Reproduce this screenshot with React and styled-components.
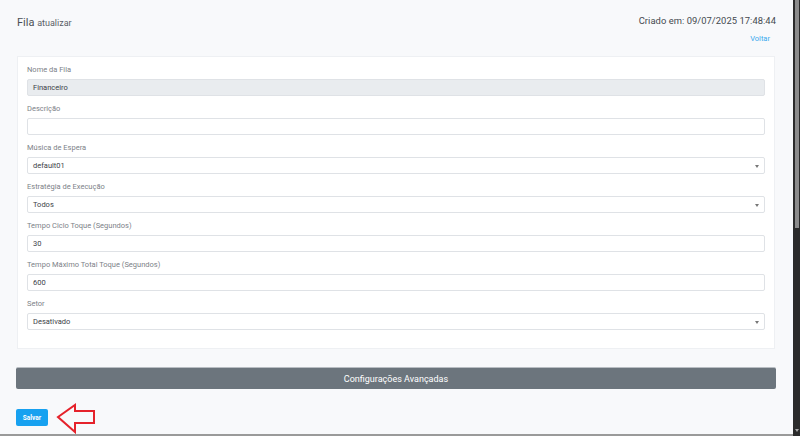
import React from "react";
import styled, { createGlobalStyle } from "styled-components";

const Global = createGlobalStyle`
  html, body { margin: 0; padding: 0; }
  body {
    background: #f8f9fb;
    font-family: Roboto, "Liberation Sans", Arial, sans-serif;
    overflow: hidden;
  }
`;

const Page = styled.div`
  display: flex;
  width: 800px;
  height: 436px;
  overflow: hidden;
`;

const Main = styled.main`
  flex: 1;
  display: flex;
  flex-direction: column;
  padding: 0 17px 0 16px;
  border-bottom: 2px solid #9a9a9a;
  box-sizing: border-box;
  height: 436px;
  overflow: hidden;

  & > * {
    flex-shrink: 0;
  }
`;

const Header = styled.header`
  display: flex;
  justify-content: space-between;
  align-items: flex-start;
  padding: 14px 0 0 1px;
  height: 56px;
  box-sizing: border-box;
`;

const Title = styled.h1`
  margin: 2px 0 0;
  font-size: 11px;
  font-weight: 400;
  color: #4a4f55;
  line-height: 13px;
`;

const Sub = styled.small`
  font-size: 9px;
  color: #5a5f66;
`;

const HeaderRight = styled.div`
  display: flex;
  flex-direction: column;
  align-items: flex-end;
`;

const Created = styled.div`
  font-size: 9.4px;
  color: #44494f;
  line-height: 13px;
  letter-spacing: 0.05px;
`;

const Back = styled.a`
  margin: 7px 6px 0 0;
  font-size: 7.5px;
  color: #3aa9ee;
  text-decoration: none;
  line-height: 10px;
`;

const Card = styled.section`
  margin: 0 1px;
  background: #fff;
  border: 1px solid #eef0f3;
  padding: 8px 9px 10px 9px;
  display: flex;
  flex-direction: column;
`;

const Group = styled.div`
  display: flex;
  flex-direction: column;
  margin-bottom: 8px;
`;

const Label = styled.label`
  font-size: 7.5px;
  line-height: 10px;
  color: #7d8288;
  margin-bottom: 4px;
`;

const Field = styled.div`
  height: 17px;
  box-sizing: border-box;
  border: 1px solid #dfe2e6;
  border-radius: 2px;
  background: ${(p) => (p.$disabled ? "#e9ecef" : "#fff")};
  display: flex;
  align-items: center;
  justify-content: space-between;
  padding: 0 5px 0 5px;
  font-size: 7.5px;
  color: #3c4148;
`;

const Caret = styled.span`
  width: 0;
  height: 0;
  border-left: 2px solid transparent;
  border-right: 2px solid transparent;
  border-top: 3px solid #777;
  margin-top: 1px;
`;

const AdvancedButton = styled.button`
  margin-top: 18px;
  height: 22px;
  width: 100%;
  border: none;
  border-top: 1px solid #b9bec3;
  border-radius: 2px;
  background: #6c757d;
  color: #fff;
  font-family: inherit;
  font-size: 9px;
  padding: 0;
`;

const Footer = styled.div`
  display: flex;
  align-items: flex-start;
  margin-top: 19px;
`;

const SaveButton = styled.button`
  height: 17px;
  width: 32px;
  border: none;
  border-radius: 2px;
  background: #17a1f0;
  color: #fff;
  font-family: inherit;
  font-size: 6.5px;
  font-weight: 700;
  padding: 0;
  margin-top: 1px;
`;

const Pointer = styled.svg`
  margin: -5px 0 0 8px;
  display: block;
`;

const ScrollTrack = styled.div`
  width: 7px;
  background: #2b2b2b;
  display: flex;
  flex-direction: column;
  padding-left: 1px;
  box-sizing: border-box;
`;

const ScrollThumb = styled.div`
  height: 228px;
  width: 4px;
  margin-left: 1px;
  background: #8c8c8c;
`;

const ScrollArrow = styled.div`
  margin-top: auto;
  margin-bottom: 4px;
  margin-left: 1px;
  width: 0;
  height: 0;
  border-left: 2px solid transparent;
  border-right: 2px solid transparent;
  border-top: 3px solid #a8a8a8;
`;

const fields = [
  { label: "Nome da Fila", value: "Financeiro", disabled: true },
  { label: "Descrição", value: "" },
  { label: "Música de Espera", value: "default01", select: true },
  { label: "Estratégia de Execução", value: "Todos", select: true },
  { label: "Tempo Ciclo Toque (Segundos)", value: "30" },
  { label: "Tempo Máximo Total Toque (Segundos)", value: "600" },
  { label: "Setor", value: "Desativado", select: true },
];

export default function App() {
  return (
    <>
      <Global />
      <Page>
        <Main>
          <Header>
            <Title>
              Fila <Sub>atualizar</Sub>
            </Title>
            <HeaderRight>
              <Created>Criado em: 09/07/2025 17:48:44</Created>
              <Back href="#">Voltar</Back>
            </HeaderRight>
          </Header>
          <Card>
            {fields.map((f) => (
              <Group key={f.label}>
                <Label>{f.label}</Label>
                <Field $disabled={f.disabled}>
                  <span>{f.value}</span>
                  {f.select && <Caret />}
                </Field>
              </Group>
            ))}
          </Card>
          <AdvancedButton>Configurações Avançadas</AdvancedButton>
          <Footer>
            <SaveButton>Salvar</SaveButton>
            <Pointer width="42" height="32" viewBox="0 0 42 32">
              <path
                d="M2 14 L19 2 L19 8 L38 8 L38 20 L19 20 L19 29 Z"
                fill="none"
                stroke="#e5222b"
                strokeWidth="2"
                strokeLinejoin="miter"
              />
            </Pointer>
          </Footer>
        </Main>
        <ScrollTrack>
          <ScrollThumb />
          <ScrollArrow />
        </ScrollTrack>
      </Page>
    </>
  );
}
